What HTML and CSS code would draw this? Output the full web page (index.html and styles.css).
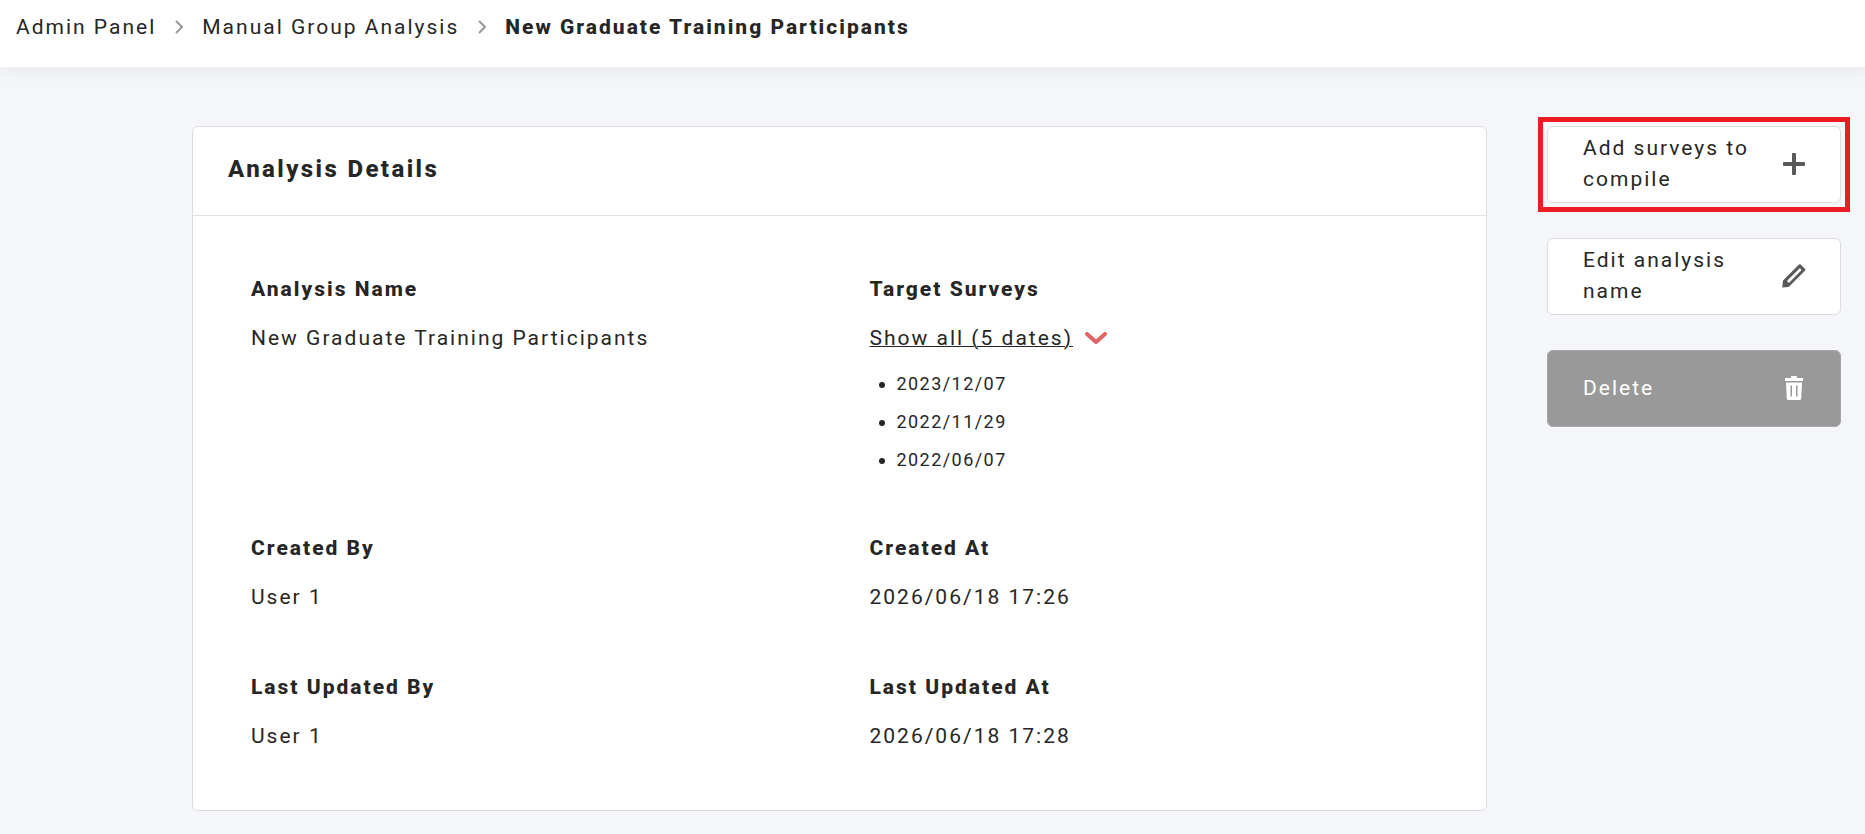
FILE: index.html
```html
<!DOCTYPE html>
<html lang="en">
<head>
<meta charset="utf-8">
<title>New Graduate Training Participants</title>
<link rel="stylesheet" href="styles.css">
</head>
<body>
<header class="topbar">
  <nav class="breadcrumb" aria-label="Breadcrumb">
    <a class="crumb" href="#admin">Admin Panel</a>
    <svg class="crumb-sep" viewBox="0 0 8 14" aria-hidden="true"><path d="M1 1l6 6-6 6"/></svg>
    <a class="crumb" href="#groups">Manual Group Analysis</a>
    <svg class="crumb-sep" viewBox="0 0 8 14" aria-hidden="true"><path d="M1 1l6 6-6 6"/></svg>
    <span class="crumb crumb-current" aria-current="page">New Graduate Training Participants</span>
  </nav>
</header>
<main class="layout">
  <section class="card">
    <h1 class="card-title">Analysis Details</h1>
    <dl class="details">
      <div class="field">
        <dt class="label">Analysis Name</dt>
        <dd class="value">New Graduate Training Participants</dd>
      </div>
      <div class="field">
        <dt class="label">Target Surveys</dt>
        <dd class="value">
          <button class="show-all" type="button">
            <span class="show-all-text">Show all (5 dates)</span>
            <svg class="show-all-icon" viewBox="0 0 22 12" aria-hidden="true"><path d="M2 2l9 8 9-8"/></svg>
          </button>
          <ul class="dates">
            <li>2023/12/07</li>
            <li>2022/11/29</li>
            <li>2022/06/07</li>
          </ul>
        </dd>
      </div>
      <div class="field">
        <dt class="label">Created By</dt>
        <dd class="value">User 1</dd>
      </div>
      <div class="field">
        <dt class="label">Created At</dt>
        <dd class="value">2026/06/18 17:26</dd>
      </div>
      <div class="field">
        <dt class="label">Last Updated By</dt>
        <dd class="value">User 1</dd>
      </div>
      <div class="field">
        <dt class="label">Last Updated At</dt>
        <dd class="value">2026/06/18 17:28</dd>
      </div>
    </dl>
  </section>
  <aside class="actions">
    <button class="action action-marked" type="button">
      <span class="action-text">Add surveys to compile</span>
      <svg class="action-icon" viewBox="0 0 24 24" aria-hidden="true"><path d="M11 1h2q1 0 1 1v8h8q1 0 1 1v2q0 1-1 1h-8v8q0 1-1 1h-2q-1 0-1-1v-8H2q-1 0-1-1v-2q0-1 1-1h8V2q0-1 1-1z"/></svg>
    </button>
    <button class="action" type="button">
      <span class="action-text">Edit analysis name</span>
      <svg class="action-icon" viewBox="0 0 24 24" aria-hidden="true"><path fill-rule="evenodd" d="M17 .5q.8-.7 1.600 0l4.500 4.400q.8.800 0 1.600L7.500 22.200q-.6.600-1.400.700L.3 23.500l.6-6.200q.1-.7.600-1.200zM17.800 4.200L5.600 16.300Q5 17.500 5.900 18.200 6.700 18.900 7.700 18.200L19.600 6z"/></svg>
    </button>
    <button class="action action-delete" type="button">
      <span class="action-text">Delete</span>
      <svg class="action-icon" viewBox="0 0 24 24" aria-hidden="true"><path fill-rule="evenodd" d="M3 2h6V0h6v2h6v3H3zM4 6.500h16l-.8 16q-.1 1.500-1.500 1.500H6.300q-1.400 0-1.500-1.500zM8.500 9.500v11H10v-11zM14 9.500v11h1.500v-11z"/></svg>
    </button>
  </aside>
</main>
</body>
</html>
```
FILE: styles.css
```css
* {
  box-sizing: border-box;
}

body {
  margin: 0;
  min-height: 100vh;
  background: #f5f6fa;
  color: #262626;
  font-family: Roboto, "Liberation Sans", sans-serif;
  font-size: 21px;
  line-height: 32px;
  letter-spacing: 2px;
}

.topbar {
  padding: 11px 16px 24px;
  background: #fff;
  box-shadow: 0 4px 16px rgba(0, 0, 0, 0.06);
}

.breadcrumb {
  display: flex;
  align-items: center;
  gap: 19px;
}

.crumb {
  color: inherit;
  text-decoration: none;
}

.crumb-current {
  font-weight: 800;
}

.crumb-sep {
  width: 8px;
  height: 14px;
  fill: none;
  stroke: #999;
  stroke-width: 2;
}

.layout {
  display: flex;
  align-items: flex-start;
  gap: 60px;
  padding: 59px 24px 22px 192px;
}

.card {
  flex: 1;
  background: #fff;
  border: 1px solid #dcdddc;
  border-radius: 6px;
}

.card-title {
  margin: 0;
  padding: 26px 35px 30px;
  border-bottom: 1px solid #e2e3e3;
  font-size: 24px;
  font-weight: 800;
  letter-spacing: 0.1em;
}

.details {
  display: grid;
  grid-template-columns: 1fr 1fr;
  gap: 58px 60px;
  margin: 0;
  padding: 57px 58px 58px;
}

.field {
  display: flex;
  flex-direction: column;
  gap: 17px;
}

.label {
  font-weight: 800;
}

.value {
  margin: 0;
}

.show-all {
  display: flex;
  align-items: center;
  gap: 12px;
  padding: 0;
  border: 0;
  background: none;
  color: inherit;
  font: inherit;
  letter-spacing: inherit;
  cursor: pointer;
}

.show-all-text {
  text-decoration: underline;
  text-decoration-thickness: 1px;
}

.show-all-icon {
  width: 22px;
  height: 12px;
  fill: none;
  stroke: #e06666;
  stroke-width: 4;
  stroke-linecap: round;
}

.dates {
  display: flex;
  flex-direction: column;
  gap: 10px;
  margin: 16px 0 0;
  padding-left: 27px;
  font-size: 18px;
  line-height: 28px;
  letter-spacing: 0.08em;
}

.actions {
  display: flex;
  flex-direction: column;
  gap: 35px;
  width: 294px;
}

.action {
  position: relative;
  display: flex;
  align-items: center;
  justify-content: space-between;
  gap: 24px;
  min-height: 77px;
  padding: 5px 34px 6px 35px;
  border: 1px solid #dcdddc;
  border-radius: 6px;
  background: #fff;
  color: inherit;
  font: inherit;
  line-height: 31px;
  letter-spacing: inherit;
  text-align: left;
  cursor: pointer;
}

.action-icon {
  flex: none;
  width: 24px;
  height: 24px;
  fill: #595959;
}

.action-marked::after {
  content: "";
  position: absolute;
  inset: -10px;
  border: 5px solid #ed1c24;
}

.action-delete {
  border-color: #a6a6a6;
  background: #999;
  color: #fff;
}

.action-delete .action-icon {
  fill: #fff;
}
```
